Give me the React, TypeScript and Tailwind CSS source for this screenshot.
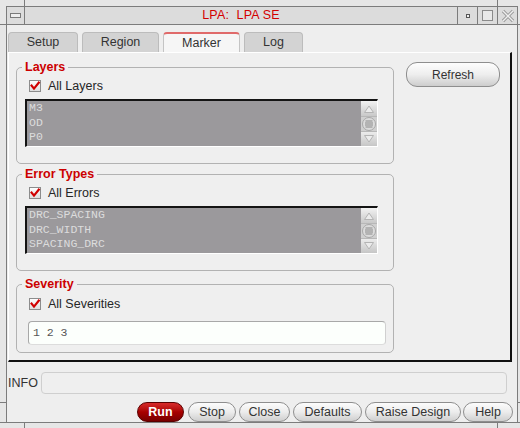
import React from 'react';

function CheckBox() {
  return (
    <svg width="12" height="12" viewBox="0 0 12 12" className="shrink-0">
      <defs>
        <linearGradient id="cbg" x1="0" y1="0" x2="0" y2="1">
          <stop offset="0" stopColor="#ffffff" />
          <stop offset="1" stopColor="#dcdcdc" />
        </linearGradient>
      </defs>
      <rect x="0.5" y="0.5" width="11" height="11" fill="url(#cbg)" stroke="#8c8c8c" />
      <path d="M2.6 5.6 L5 8.6 L9.8 2.6" stroke="#d00000" strokeWidth="2.2" fill="none" strokeLinecap="square" />
    </svg>
  );
}

function Scrollbar() {
  return (
    <div className="w-[16px] flex flex-col bg-[#d6d6d6]">
      <div className="h-[16px] flex items-center justify-center bg-linear-to-b from-[#f2f2f2] to-[#c9c9c9] border-b border-[#b8b8b8]">
        <svg width="12" height="10" viewBox="0 0 12 10">
          <polygon points="1.5,8.5 6,2 10.5,8.5" fill="#ececec" stroke="#b4b4b4" />
        </svg>
      </div>
      <div className="h-[14px] flex items-center justify-center bg-[#d0d0d0]">
        <svg width="14" height="14" viewBox="0 0 14 14">
          <circle cx="7" cy="7" r="6.5" fill="#dcdcdc" stroke="#a8a8a8" />
          <line x1="3.5" y1="4" x2="10.5" y2="4" stroke="#8a8a8a" />
          <line x1="3" y1="6" x2="11" y2="6" stroke="#8a8a8a" />
          <line x1="3" y1="8" x2="11" y2="8" stroke="#8a8a8a" />
          <line x1="3.5" y1="10" x2="10.5" y2="10" stroke="#8a8a8a" />
        </svg>
      </div>
      <div className="flex-1 flex items-center justify-center bg-linear-to-b from-[#ececec] to-[#c6c6c6] border-t border-[#b8b8b8]">
        <svg width="12" height="10" viewBox="0 0 12 10">
          <polygon points="1.5,1.5 6,8 10.5,1.5" fill="#ececec" stroke="#b4b4b4" />
        </svg>
      </div>
    </div>
  );
}

function ListBox({ items }: { items: string[] }) {
  return (
    <div className="mt-[6px] ml-[8px] w-[353px] h-[48px] flex border-t-2 border-l-2 border-b border-r border-t-[#141414] border-l-[#141414] border-b-white border-r-white">
      <div className="flex-1 bg-[#9b999c] pl-[2px] font-['Liberation_Mono',monospace] text-[11.5px] leading-[14.5px] text-[#dcdcdc]">
        {items.map((i) => (
          <div key={i}>{i}</div>
        ))}
      </div>
      <Scrollbar />
    </div>
  );
}

function CheckRow({ label, className }: { label: string; className: string }) {
  return (
    <div className={'h-[14px] pl-[12px] flex items-center text-[12.5px] text-[#262626] ' + className}>
      <CheckBox />
      <span className="ml-[7px]">{label}</span>
    </div>
  );
}

function Group({ title, className, children }: { title: string; className: string; children: React.ReactNode }) {
  return (
    <fieldset className={'w-[378px] border border-[#b2b2b2] rounded-[5px] ' + className}>
      <legend className="ml-[5px] px-[3px] text-[12.5px] leading-[15px] font-bold text-[#cc0000]">{title}</legend>
      {children}
    </fieldset>
  );
}

function Btn({ label, className }: { label: string; className: string }) {
  return (
    <div
      className={
        'h-[20px] flex items-center justify-center rounded-[10px] border border-[#8e8e8e] bg-linear-to-b from-[#fcfcfc] via-[#ececec] to-[#cfcfcf] text-[12.5px] text-[#333] ' +
        className
      }
    >
      {label}
    </div>
  );
}

function Tab({ label, active, className }: { label: string; active?: boolean; className: string }) {
  return active ? (
    <div
      className={
        'h-[20px] flex items-center justify-center rounded-t-[4px] bg-[#f6f6f6] border-t-2 border-x border-t-[#e06a6a] border-x-[#c4c4c4] text-[12.5px] text-[#333] ' +
        className
      }
    >
      {label}
    </div>
  ) : (
    <div
      className={
        'h-[20px] flex items-center justify-center rounded-t-[4px] bg-[#d3d3d3] border-t border-x border-[#bcbcbc] text-[12.5px] text-[#333] ' +
        className
      }
    >
      {label}
    </div>
  );
}

export default function App() {
  return (
    <div className="w-[520px] h-[428px] flex flex-col overflow-hidden bg-[#e6e6e6] font-['Liberation_Sans',Arial,sans-serif] text-[#222]">
      {/* top frame band */}
      <div className="h-[6px] shrink-0 flex">
        <div className="w-[25px] border-r border-[#7c7c7c]" />
        <div className="w-[473px] border-r border-[#7c7c7c]" />
      </div>
      {/* title bar row */}
      <div className="h-[19px] shrink-0 flex border-b border-[#7c7c7c]">
        <div className="w-[6px]" />
        <div className="flex-1 flex border-t border-x border-[#7c7c7c] bg-[#dcdcdc]">
          <div className="w-[18px] border-r border-[#7c7c7c] flex items-center justify-center">
            <div className="w-[11px] h-[5px] border border-[#7a7a7a] bg-[#ededed]" />
          </div>
          <div className="flex-1 flex items-center justify-center text-[12.5px] text-[#d40000] tracking-[0.2px]">
            LPA:&nbsp; LPA SE
          </div>
          <div className="w-[20px] border-l border-[#7c7c7c] flex items-center justify-center">
            <div className="w-[4px] h-[4px] border border-[#555] bg-[#f0f0f0]" />
          </div>
          <div className="w-[20px] border-l border-[#7c7c7c] flex items-center justify-center">
            <div className="w-[11px] h-[11px] border border-[#8a8a8a] bg-[#e8e8e8]" />
          </div>
          <div className="w-[20px] border-l border-[#7c7c7c] flex items-center justify-center">
            <svg width="14" height="14" viewBox="0 0 14 14">
              <path d="M2 2 L12 12 M12 2 L2 12" stroke="#9a9a9a" strokeWidth="3.2" />
              <path d="M2 2 L12 12 M12 2 L2 12" stroke="#efefef" strokeWidth="1.3" />
            </svg>
          </div>
        </div>
        <div className="w-[2px]" />
      </div>
      {/* middle row */}
      <div className="flex-1 min-h-0 flex">
        <div className="w-[6px] flex flex-col">
          <div className="h-[378px] border-b border-[#7c7c7c]" />
        </div>
        <div className="flex-1 flex flex-col border-x border-[#7c7c7c] bg-[#eeeeee] pt-[7px] pl-[1px]">
          {/* tabs */}
          <div className="h-[20px] flex gap-[4px]">
            <Tab label="Setup" className="w-[70px]" />
            <Tab label="Region" className="w-[77px]" />
            <Tab label="Marker" active className="w-[77px]" />
            <Tab label="Log" className="w-[59px]" />
          </div>
          {/* panel */}
          <div className="w-[504px] h-[310px] flex border-t border-l border-white border-r-2 border-b-2 border-r-[#111] border-b-[#111] bg-[#efefef] pt-[7px] pl-[7px]">
            <div className="flex flex-col">
              <Group title="Layers" className="">
                <CheckRow label="All Layers" className="mt-[4px]" />
                <ListBox items={['M3', 'OD', 'P0']} />
                <div className="h-[16px]" />
              </Group>
              <Group title="Error Types" className="mt-[3px]">
                <CheckRow label="All Errors" className="mt-[4px]" />
                <ListBox items={['DRC_SPACING', 'DRC_WIDTH', 'SPACING_DRC']} />
                <div className="h-[16px]" />
              </Group>
              <Group title="Severity" className="mt-[6px]">
                <CheckRow label="All Severities" className="mt-[5px]" />
                <div className="mt-[10px] ml-[11px] w-[358px] h-[24px] flex items-center rounded-[4px] border border-[#a8a8a8] border-b-[#dcdcdc] border-r-[#d0d0d0] bg-[#fcfffc] pl-[4px] font-['Liberation_Mono',monospace] text-[11.5px] text-[#555]">
                  1 2 3
                </div>
                <div className="h-[7px]" />
              </Group>
            </div>
            <div className="ml-[12px] mt-[2px]">
              <div className="w-[94px] h-[25px] flex items-center justify-center rounded-[11px] border border-[#8e8e8e] bg-linear-to-b from-[#fdfdfd] via-[#eeeeee] to-[#cdcdcd] text-[12px] text-[#333]">
                Refresh
              </div>
            </div>
          </div>
          {/* info row */}
          <div className="mt-[10px] h-[22px] flex items-center">
            <div className="w-[33px] text-[12.5px] text-[#333]">INFO</div>
            <div className="flex-1 h-full mr-[10px] rounded-[4px] border border-[#cfcfcf] bg-[#efefef]" />
          </div>
          {/* buttons row */}
          <div className="mt-[8px] h-[20px] flex pl-[129px]">
            <div className="w-[47px] h-[20px] flex items-center justify-center rounded-[10px] border border-[#5a0000] bg-linear-to-b from-[#d82a2a] via-[#a80000] to-[#780000] text-[12.5px] font-bold text-white">
              Run
            </div>
            <Btn label="Stop" className="ml-[4px] w-[48px]" />
            <Btn label="Close" className="ml-[3px] w-[51px]" />
            <Btn label="Defaults" className="ml-[3px] w-[69px]" />
            <Btn label="Raise Design" className="ml-[3px] w-[96px]" />
            <Btn label="Help" className="ml-[2px] w-[50px]" />
          </div>
        </div>
        <div className="w-[2px] flex flex-col">
          <div className="h-[378px] border-b border-[#7c7c7c]" />
        </div>
      </div>
      {/* bottom frame band */}
      <div className="h-[6px] shrink-0 flex border-t border-[#7c7c7c]">
        <div className="w-[25px] border-r border-[#7c7c7c]" />
        <div className="w-[473px] border-r border-[#7c7c7c]" />
      </div>
    </div>
  );
}
